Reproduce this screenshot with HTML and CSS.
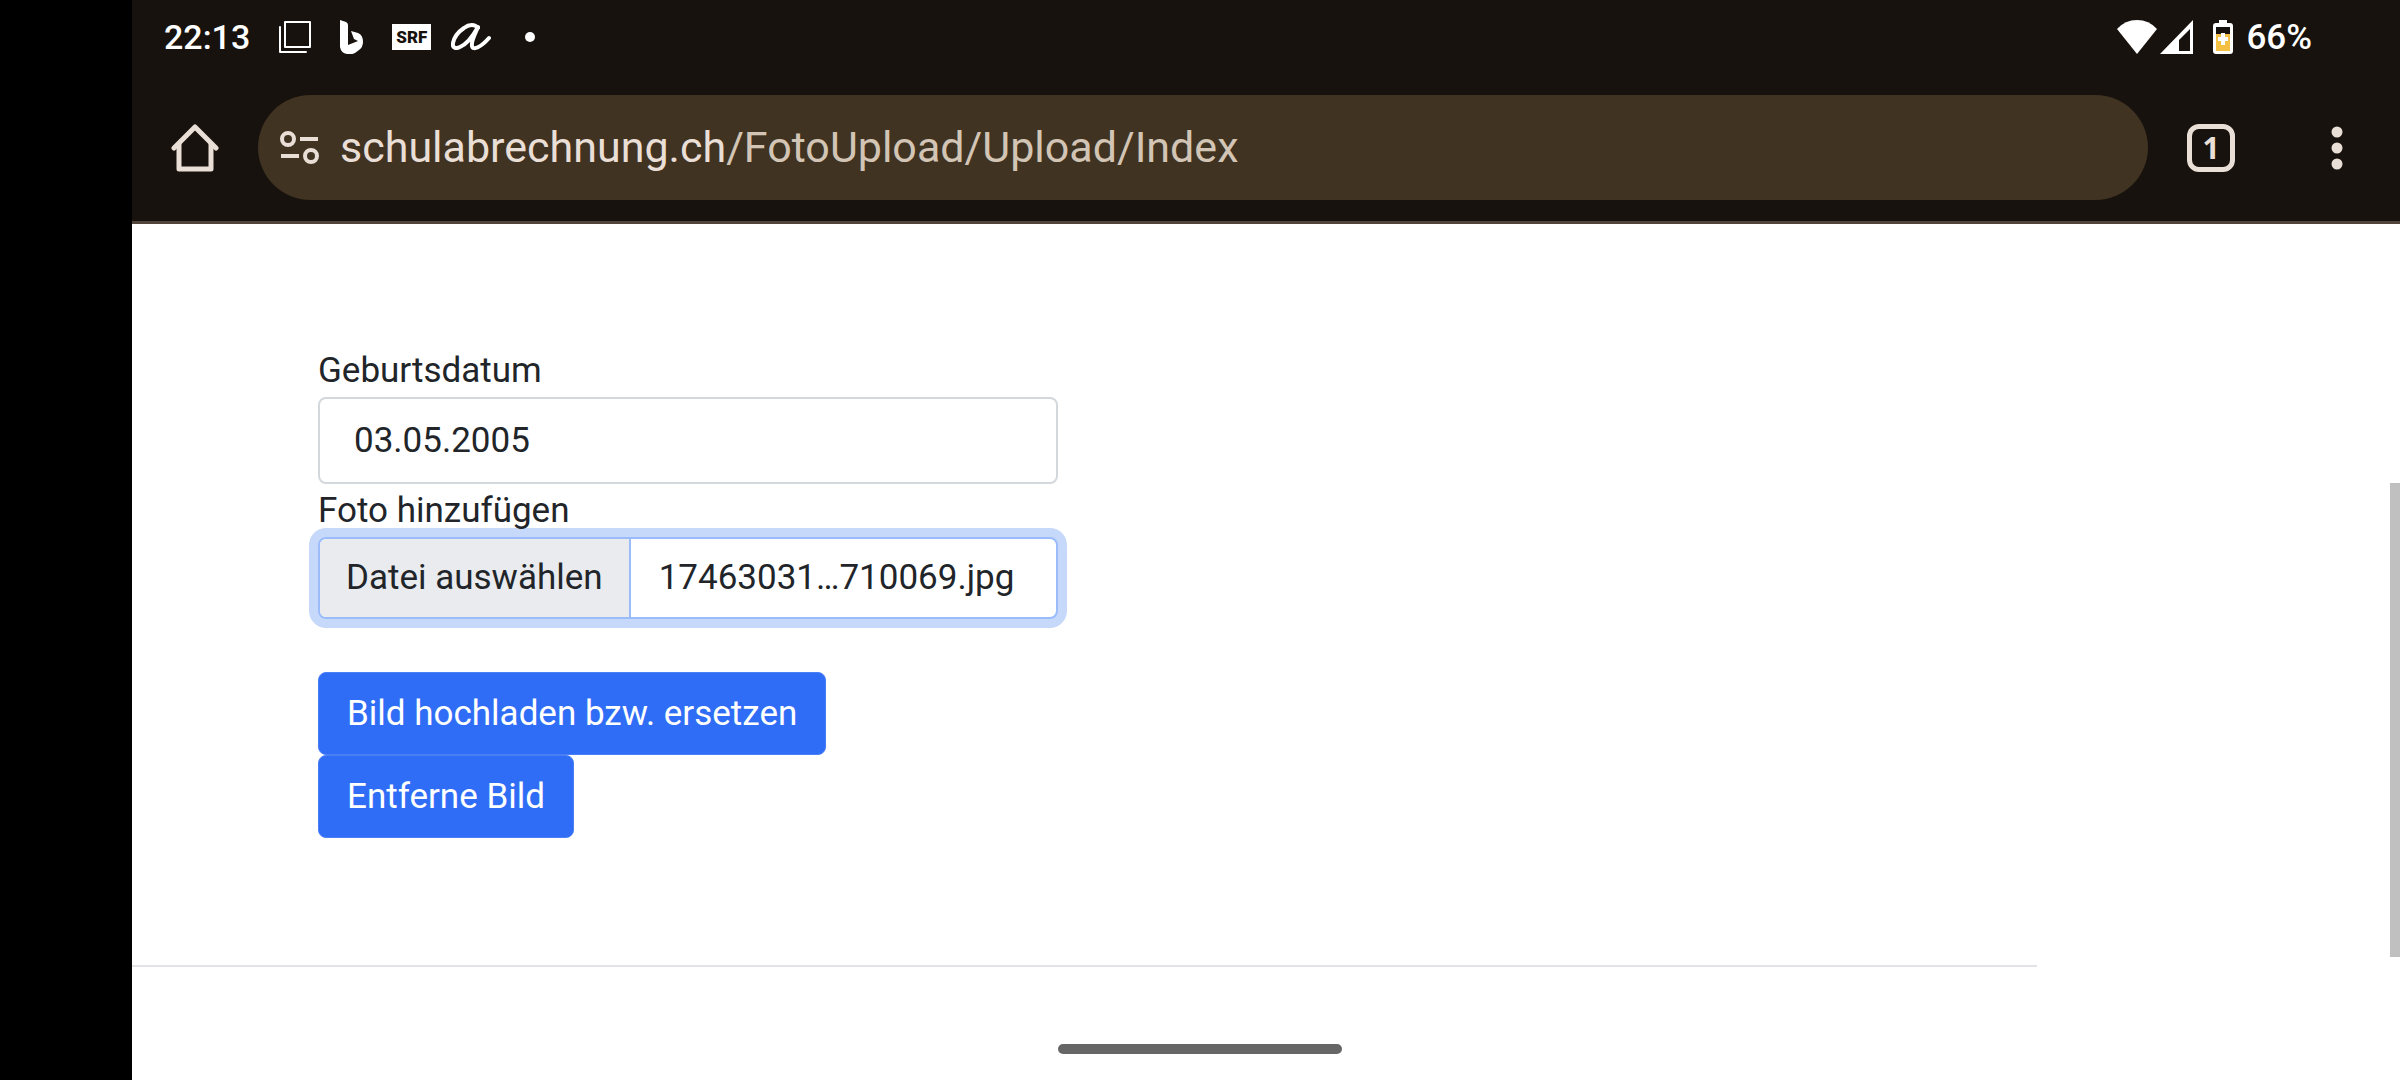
FILE: index.html
```html
<!DOCTYPE html>
<html lang="de">
<head>
<meta charset="utf-8">
<meta name="viewport" content="width=device-width, initial-scale=1">
<title>Foto Upload</title>
<link rel="stylesheet" href="styles.css">
</head>
<body>
<div class="screen">
  <header class="browser">
    <div class="status">
      <div class="status-left">
        <span class="clock">22:13</span>
        <svg class="st-icon" width="34" height="34" viewBox="0 0 34 34" fill="none" stroke="#fff" stroke-width="2" stroke-linejoin="round" stroke-linecap="round"><rect x="7" y="2" width="25" height="25"/><path d="M2 7v25h26"/></svg>
        <svg class="st-icon" width="24" height="34" viewBox="0 0 24 34" fill="#fff"><path fill-rule="evenodd" d="M0 0l6 2q2 1 2 3v20l10-4-4-2-3-8 7 2q5 2 5 9 0 5-4 8l-4 3q-4 2-8 1-6-1-7-7z"/></svg>
        <span class="srf">SRF</span>
        <svg class="script-a" width="40" height="28" viewBox="0 0 40 28" fill="none" stroke="#fff" stroke-width="4" stroke-linecap="round" stroke-linejoin="round"><path d="M27 5C24 1 18 1 13 5 7 9 3 15 2 20c-1 5 3 6 7 4 7-3 13-11 18-20-3 7-7 14-6 19 1 5 9 1 17-8"/></svg>
        <span class="dot"></span>
      </div>
      <div class="status-right">
        <svg width="40" height="34" viewBox="0 0 40 34" fill="#fff"><path d="M0 9Q8 0 20 0t20 9L20 34z"/></svg>
        <svg width="34" height="34" viewBox="0 0 34 34"><path fill="#fff" fill-rule="evenodd" d="M33 0v34H0zM30 9L19 20v11h11z"/></svg>
        <svg class="battery" width="20" height="34" viewBox="0 0 20 34"><path fill="#fff" d="M6 0h8v3h3q3 0 3 3v25q0 3-3 3H3q-3 0-3-3V6q0-3 3-3h3z"/><path fill="#17120d" d="M3 7h14v7H3z"/><path fill="#f3c043" d="M3 14h14v17H3z"/><path fill="#fff" d="M8 13h4v4h3v4h-3v4H8v-4H5v-4h3z"/></svg>
        <span class="percent">66%</span>
      </div>
    </div>
    <div class="toolbar">
      <button class="tool" type="button" aria-label="Startseite">
        <svg width="48" height="48" viewBox="0 0 48 48" fill="none" stroke="#eadfd6" stroke-width="5" stroke-linejoin="round" stroke-linecap="round"><path d="M3 24L24 3l21 21"/><path d="M8 20v25h32V20"/></svg>
      </button>
      <button class="address" type="button">
        <svg width="40" height="34" viewBox="0 0 40 34" fill="none" stroke="#eadfd6" stroke-width="4"><circle cx="8" cy="8" r="6"/><circle cx="31" cy="25" r="6"/><path d="M20 8h18M1 25h18"/></svg>
        <span class="url">schulabrechnung.ch<span class="path">/FotoUpload/Upload/Index</span></span>
      </button>
      <button class="tool" type="button" aria-label="Tabs"><span class="tab-count">1</span></button>
      <button class="tool" type="button" aria-label="Menü">
        <svg width="12" height="44" viewBox="0 0 12 44" fill="#eadfd6"><circle cx="6" cy="6" r="5.5"/><circle cx="6" cy="22" r="5.5"/><circle cx="6" cy="38" r="5.5"/></svg>
      </button>
    </div>
  </header>
  <main class="page">
    <form class="form">
      <label class="label" for="birth">Geburtsdatum</label>
      <input class="control" id="birth" type="text" value="03.05.2005">
      <label class="label" for="photo">Foto hinzufügen</label>
      <div class="file">
        <input class="file-native" id="photo" type="file" accept="image/*">
        <label class="file-button" for="photo">Datei auswählen</label>
        <span class="file-name">17463031…710069.jpg</span>
      </div>
      <div class="actions">
        <button class="btn" type="button">Bild hochladen bzw. ersetzen</button>
        <button class="btn" type="button">Entferne Bild</button>
      </div>
    </form>
    <hr class="rule">
    <div class="scroll-thumb"></div>
  </main>
</div>
<div class="gesture"></div>
</body>
</html>
```
FILE: styles.css
```css
*, *::before, *::after { box-sizing: border-box; }

body {
  margin: 0;
  min-height: 100vh;
  position: relative;
  display: flex;
  padding-left: 132px;
  background: #000;
  color: #212529;
  font-family: Roboto, sans-serif;
  font-size: 35px;
  line-height: 53px;
}

button, input { font: inherit; color: inherit; }
svg { display: block; flex: none; }

.screen { flex: 1; min-width: 0; display: flex; flex-direction: column; }

/* Browser chrome */
.browser { background: #17120d; border-bottom: 3px solid #51453c; }

.status {
  display: flex;
  justify-content: space-between;
  align-items: center;
  height: 74px;
  padding: 0 88px 0 32px;
  color: #fff;
  font-weight: 500;
}
.status-left, .status-right { display: flex; align-items: center; }
.status-left { gap: 28px; }
.status-right { gap: 3px; }
.clock { font-size: 34px; }
.battery { margin: 0 10px 0 16px; }
.srf {
  width: 39px;
  height: 26px;
  background: #fff;
  color: #17120d;
  font-size: 17px;
  font-weight: 900;
  line-height: 26px;
  text-align: center;
}
.script-a { margin-left: -8px; }
.dot { width: 10px; height: 10px; margin-left: 6px; border-radius: 50%; background: #fff; }

.toolbar { display: flex; align-items: center; padding: 21px 0; }
.tool {
  display: flex;
  align-items: center;
  justify-content: center;
  width: 126px;
  height: 105px;
  padding: 0;
  border: 0;
  background: none;
  color: #eadfd6;
}
.address {
  flex: 1;
  min-width: 0;
  display: flex;
  align-items: center;
  gap: 20px;
  height: 105px;
  padding: 0 22px;
  border: 0;
  border-radius: 53px;
  background: #413322;
  color: #eadfd6;
  font-size: 43px;
  text-align: left;
}
.path { color: #d3c5b5; }
.tab-count {
  width: 48px;
  height: 48px;
  border: 5px solid #eadfd6;
  border-radius: 12px;
  font-family: "Open Sans", sans-serif;
  font-size: 30px;
  font-weight: 700;
  line-height: 38px;
}

/* Upload page */
.page { position: relative; flex: 1; background: #fff; }
.form {
  display: flex;
  flex-direction: column;
  max-width: 926px;
  padding: 120px 0 0 186px;
}
.label { display: block; position: relative; z-index: 1; }
.control {
  width: 100%;
  height: 87px;
  padding: 0 34px;
  border: 2px solid #d3d8dd;
  border-radius: 8px;
  background: #fff;
}
.file {
  display: flex;
  height: 82px;
  border: 2px solid #9abcfa;
  border-radius: 8px;
  background: #fff;
  box-shadow: 0 0 0 9px #c7d9fb;
  line-height: 78px;
}
.file-native { position: absolute; width: 1px; height: 1px; opacity: 0; }
.file-button {
  padding: 0 26px;
  border-right: 2px solid #9abcfa;
  border-radius: 6px 0 0 6px;
  background: #e9ebef;
}
.file-name { padding-left: 28px; }

.actions { display: flex; flex-direction: column; align-items: flex-start; padding-top: 53px; }
.btn {
  height: 83px;
  padding: 0 28px;
  border: 1px solid #4b7ff6;
  border-radius: 8px;
  background: #306df6;
  color: #fff;
}

.rule { width: 84%; margin: 127px 0 0; border: 0; border-top: 2px solid #e2e2e7; }

.scroll-thumb { position: absolute; top: 259px; right: 0; width: 10px; height: 474px; background: #c0c0c0; }
.gesture {
  position: absolute;
  bottom: 26px;
  left: 50%;
  width: 284px;
  height: 10px;
  margin-left: -142px;
  border-radius: 5px;
  background: #666;
}
```
